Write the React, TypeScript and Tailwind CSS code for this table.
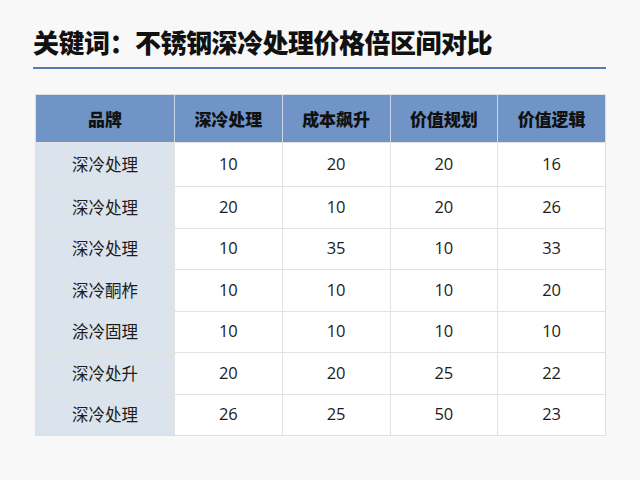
import React from "react";

const headers = ["品牌", "深冷处理", "成本飙升", "价值规划", "价值逻辑"];
const rows: [string, string, string, string, string][] = [
  ["深冷处理", "10", "20", "20", "16"],
  ["深冷处理", "20", "10", "20", "26"],
  ["深冷处理", "10", "35", "10", "33"],
  ["深冷酮柞", "10", "10", "10", "20"],
  ["涂冷固理", "10", "10", "10", "10"],
  ["深冷处升", "20", "20", "25", "22"],
  ["深冷处理", "26", "25", "50", "23"],
];

export default function App() {
  return (
    <div
      className="w-[640px] h-[480px] bg-[#f8f8f8] overflow-hidden"
      style={{ fontFamily: '"Noto Sans CJK SC", "Noto Sans", sans-serif' }}
    >
      <div className="pl-[33px] pr-[34px] pt-[25px]">
        <h1 className="text-[26px] leading-[34px] font-black text-[#111] tracking-[-0.5px]">
          关键词：不锈钢深冷处理价格倍区间对比
        </h1>
        <div className="mt-[8px] h-[2px] bg-[#5579b0]" />
      </div>
      <div className="pl-[35px] pr-[34px] mt-[25px]">
        <div className="grid grid-cols-[138px_1fr_1fr_1fr_1fr] border border-[#dedede] bg-white">
          {headers.map((h, i) => (
            <div
              key={i}
              className={`h-[47px] flex items-center justify-center bg-[#6f94c5] text-[17px] font-extrabold text-[#111] ${
                i > 0 ? "border-l border-[#c9d6e8]" : ""
              }`}
            >
              {h}
            </div>
          ))}
          {rows.map((r, ri) =>
            r.map((c, ci) => (
              <div
                key={`${ri}-${ci}`}
                className={`${ri === 0 ? "h-[44px]" : "h-[41.5px]"} flex items-center justify-center text-[16.5px] text-[#1c1c1c] border-t border-[#e2e2e2] ${
                  ci === 0 ? "bg-[#dbe3ed]" : "bg-white border-l"
                }`}
                style={ci > 0 ? { fontFamily: '"Open Sans", "Noto Sans", sans-serif' } : undefined}
              >
                {c}
              </div>
            ))
          )}
        </div>
      </div>
    </div>
  );
}
